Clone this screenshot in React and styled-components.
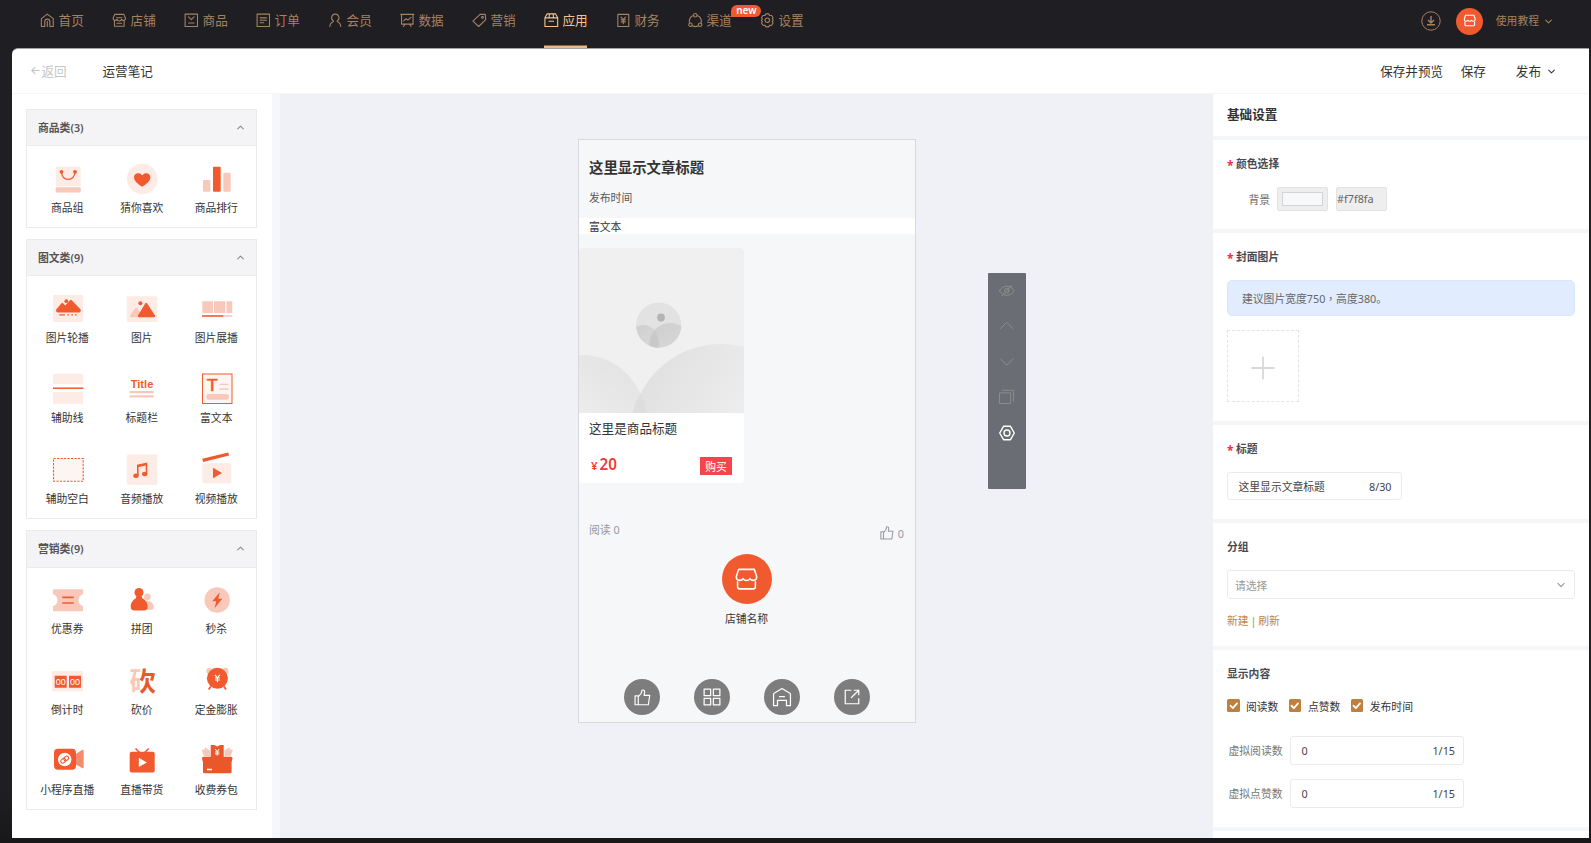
import React from 'react';
import styled, { createGlobalStyle } from 'styled-components';

const ORANGE = '#f15a2f';
const PEACH = '#f8c9ba';
const BLUSH = '#fdece6';

const GlobalStyle = createGlobalStyle`
  * {
    box-sizing: border-box;
  }
  body {
    margin: 0;
    background: #18171a;
    color: #333;
    font-family: "Noto Sans", "Noto Sans CJK SC", sans-serif;
    font-size: 10.8px;
  }
`;

const Page = styled.div`
  width: 1591px;
  height: 843px;
  display: flex;
  flex-direction: column;
  overflow: hidden;
  background: linear-gradient(#1f1e22 790px, #18171a);
`;

const Svg = styled.svg`
  display: block;
  flex: none;
  overflow: visible;
`;

/* ---------- line icons ---------- */

function LineIcon({ size = 15, width = 1, color = 'currentColor', children }) {
  return (
    <Svg width={size} height={size} viewBox="0 0 16 16" fill="none" stroke={color} strokeWidth={width} strokeLinejoin="round" strokeLinecap="round">
      {children}
    </Svg>
  );
}

const glyphs = {
  home: <path d="M1.5 6.2 8 1.2l6.5 5v8.6h-3.700V9.500a2.800 2.800 0 0 0-5.600 0v5.300H1.500ZM8 9v5.800" />,
  shop: (
    <>
      <path d="M3 1.500h10l1.800 4.300a2.200 2.200 0 0 1-4.200 1 2.700 2.700 0 0 1-5.200 0 2.200 2.200 0 0 1-4.200-1Z" />
      <path d="M2.700 8v6.500h10.600V8M5 5.200h6M5.500 11.300h5" />
    </>
  ),
  goods: <path d="M1.200 1.200h13.600v13.600H1.200ZM5 4.300l3 3 3-3M5 11h6" />,
  order: <path d="M1.200 1.200h13.600v13.600H1.200ZM4.500 5.300h7M4.500 8h7M4.500 10.700h4" />,
  member: <path d="M8 1.200a4 4 0 0 1 2.300 7.300L10 9.300c2.500 1 3.800 3 4 5.500M8 1.200a4 4 0 0 0-2.300 7.300L6 9.300c-2.500 1-3.800 3-4 5.500" />,
  data: <path d="M.8 1.500h14.400M1.700 1.500v10.700h12.600V1.500M4 8.700l2.600-2.600 2 1.700L12 4.700M5.300 12.500l-1.500 2.300M10.700 12.500l1.500 2.300" />,
  tag: (
    <>
      <path d="M8.800 1.500h5.700l.5 5.700-7.700 7.600L1 8.800Z" />
      <circle cx="11.500" cy="4.800" r="1" />
    </>
  ),
  app: <path d="M1 5.300 3.300 1h9.400L15 5.300v9.500H1ZM1 5.300h14M5.500 5.300 6 1M10.500 5.300 10 1M5.500 9h5" />,
  finance: <path d="M2 1.500h12v13.300H2ZM5.500 4.500 8 7.200l2.500-2.700M5.700 7.500h4.600M5.700 9.700h4.600M8 7.300v4.500" />,
  channel: (
    <>
      <path d="M5.800 2.700a6.500 6.500 0 0 0-4 8.400M10.200 2.700a6.500 6.500 0 0 1 4 8.400M4.700 14a7 7 0 0 0 6.600 0" />
      <circle cx="8" cy="2.500" r="1.900" />
      <circle cx="2.700" cy="12.800" r="1.900" />
      <circle cx="13.300" cy="12.800" r="1.900" />
    </>
  ),
  gear: (
    <>
      <path d="M6.500 1h3l1 1.600 2.300.1 1.500 2.500-.8 1.500 1 1.300-1 1.500.8 1.500-1.500 2.500-2.300.1-1 1.600h-3l-1-1.600-2.300-.1-1.500-2.500.8-1.500-1-1.500 1-1.300-.8-1.500 1.500-2.500 2.300-.1Z" />
      <circle cx="8" cy="8" r="2.500" />
    </>
  ),
  store: (
    <>
      <path d="M3 1.500h10l1.500 4.500c.3 3-3.200 3.200-4.300 1.400-1 1.700-3.400 1.700-4.400 0C4.700 9.200 1.200 9 1.500 6Z" />
      <path d="M2.300 9.500v3.200q0 1.300 1.300 1.300h8.800q1.300 0 1.300-1.300V9.500" />
    </>
  ),
  down: <path d="m3 5.500 5 5 5-5" />,
  up: <path d="m3 10.500 5-5 5 5" />,
  wideUp: <path d="m1.500 11 6.500-6.500 6.500 6.500" />,
  wideDown: <path d="m1.500 5 6.500 6.500L14.500 5" />,
  back: <path d="M14.500 8H1.500M7 2.500 1.500 8 7 13.500" />,
  thumb: <path d="M1 6.500h3v8.300H1ZM4 7.500 6.800 4 7.500 1.200c1.500-.7 2.600.2 2.500 1.700L9.500 6h5.300l-1.300 8.800H4Z" />,
  grid: <path d="M1 1h5.800v5.800H1ZM9.200 1H15v5.800H9.200ZM1 9.200h5.800V15H1ZM9.200 9.200H15V15H9.200Z" />,
  house: <path d="M.5 5.500Q.5 5 1 4.600L8 .5l7 4.100q.5.400.5.900v10.200h-3.500v-4.700h-8v4.700H.5ZM5.800 7.700h4.400" />,
  share: <path d="M7 2H2v12h12V9.500M10 2h4v4M14 2 7.500 8.500" />,
  hidden: (
    <>
      <path d="M.5 8c3-6.300 12-6.300 15 0-3 6.300-12 6.300-15 0ZM3 13.500 13 2.500" />
      <circle cx="8" cy="8" r="2.300" />
    </>
  ),
  copy: <path d="M1 4h11v11H1ZM3.500 1.300H15V12.500" />,
  hexagon: (
    <>
      <path d="M4.500 1.300h7L15.300 8l-3.800 6.700h-7L.7 8Z" />
      <circle cx="8" cy="8" r="3" />
    </>
  ),
};

/* ---------- top navigation ---------- */

const TopBar = styled.header`
  height: 48px;
  flex: none;
  display: flex;
  justify-content: space-between;
  padding: 0 38px 0 40px;
  color: #a58261;
`;

const Nav = styled.nav`
  display: flex;
  gap: 28.8px;
`;

const NavItem = styled.a`
  position: relative;
  width: 43.2px;
  height: 48px;
  padding-bottom: 7px;
  display: flex;
  align-items: center;
  gap: 4px;
  font-size: 12.600px;
  line-height: 20px;
  white-space: nowrap;
  color: ${({ $active }) => ($active ? '#f5c48d' : '#a58261')};
  box-shadow: ${({ $active }) => ($active ? 'inset 0 -2.500px #f0b77e' : 'none')};
`;

const NewBadge = styled.span`
  position: absolute;
  left: 43.500px;
  top: 5px;
  width: 30px;
  height: 12px;
  border-radius: 6px 6px 6px 0;
  background: ${ORANGE};
  color: #fff;
  font-size: 10px;
  font-weight: 600;
  line-height: 11px;
  text-align: center;
`;

const TopTools = styled.div`
  display: flex;
  align-items: center;
  padding-bottom: 6px;
`;

const Avatar = styled.span`
  width: ${({ $size }) => $size}px;
  height: ${({ $size }) => $size}px;
  margin-left: ${({ $left }) => $left || 0}px;
  border-radius: 50%;
  display: flex;
  align-items: center;
  justify-content: center;
  background: ${({ $bg }) => $bg || ORANGE};
  color: #fff;
`;

const Tutorial = styled.span`
  display: flex;
  align-items: center;
  gap: 5px;
  margin-left: 13px;
  padding-bottom: 2px;
  svg {
    margin-top: 2px;
  }
`;

const NAV = [
  ['home', '首页'],
  ['shop', '店铺'],
  ['goods', '商品'],
  ['order', '订单'],
  ['member', '会员'],
  ['data', '数据'],
  ['tag', '营销'],
  ['app', '应用'],
  ['finance', '财务'],
  ['channel', '渠道'],
  ['gear', '设置'],
];

function Header() {
  return (
    <TopBar>
      <Nav>
        {NAV.map(([icon, label]) => (
          <NavItem key={icon} $active={icon === 'app'}>
            <LineIcon size={14.600} width={1.2}>{glyphs[icon]}</LineIcon>
            {label}
            {icon === 'channel' && <NewBadge>new</NewBadge>}
          </NavItem>
        ))}
      </Nav>
      <TopTools>
        <Svg width="20" height="20" viewBox="0 0 20 20" fill="none" stroke="#a58261">
          <circle cx="10" cy="10" r="9.200" />
          <path d="M10 5v6.500M7 9l3 3 3-3M6 13.800h8" strokeWidth="1.400" />
        </Svg>
        <Avatar $size={27} $left={14.500}>
          <LineIcon size={13.500} width={1.300}>{glyphs.store}</LineIcon>
        </Avatar>
        <Tutorial>
          使用教程
          <LineIcon size={9} width={1.800}>{glyphs.down}</LineIcon>
        </Tutorial>
      </TopTools>
    </TopBar>
  );
}

/* ---------- workspace ---------- */

const Workspace = styled.main`
  width: 1577px;
  height: 790px;
  margin-left: 12px;
  display: flex;
  flex-direction: column;
  border-radius: 6px 0 0 0;
  border-top: 1px solid #a09fa3;
  overflow: hidden;
  background: #fff;
`;

const TitleBar = styled.div`
  height: 45px;
  flex: none;
  display: flex;
  align-items: center;
  padding: 0 33px 2px 19px;
  border-bottom: 1px solid #f5f6f8;
  font-size: 12.600px;
`;

const Back = styled.span`
  display: flex;
  align-items: center;
  gap: 1.500px;
  width: 71.500px;
  color: #c6c6c6;
`;

const Actions = styled.div`
  display: flex;
  align-items: center;
  margin-left: auto;
`;

const Action = styled.span`
  display: flex;
  align-items: center;
  gap: 6px;
  margin-left: ${({ $left }) => $left || 0}px;
  svg {
    margin-top: 3px;
  }
`;

const Columns = styled.div`
  flex: 1;
  min-height: 0;
  display: flex;
`;

/* ---------- component library ---------- */

const Sidebar = styled.aside`
  width: 268px;
  flex: none;
  padding: 15px 0 0 14px;
  display: flex;
  flex-direction: column;
  gap: 11px;
  border-right: 8px solid #f6f7fc;
`;

const Group = styled.section`
  width: 231px;
  border: 1px solid #ebebed;
`;

const GroupHead = styled.div`
  height: 36.400px;
  display: flex;
  align-items: center;
  justify-content: space-between;
  padding: 0 11.500px 2px 11px;
  background: #f4f4f7;
  border-bottom: 1px solid #ebebed;
  color: #555;
  font-weight: 600;
  svg {
    margin-top: 2px;
  }
`;

const GroupBody = styled.div`
  display: grid;
  grid-template-columns: repeat(3, 74.500px);
  grid-auto-rows: 80.600px;
  padding-left: 3px;
`;

const Tile = styled.div`
  display: flex;
  flex-direction: column;
  align-items: center;
  padding-top: 16.500px;
  line-height: 16px;
  gap: 5px;
  white-space: nowrap;
  svg {
    margin-left: 1.400px;
  }
`;

const pic = {
  商品组: (
    <>
      <rect x="3.700" y="3.700" width="25" height="19.600" rx="1" fill={BLUSH} />
      <rect x="3.700" y="24.200" width="25" height="5.300" rx="1" fill={PEACH} />
      <path d="M9.500 9c.3 4.500 3 7.300 6.700 7.300S22.600 13.500 23 9" fill="none" stroke={ORANGE} strokeWidth="1.300" />
      <circle cx="9.500" cy="8.800" r="1.900" fill={ORANGE} />
      <circle cx="23" cy="8.800" r="1.900" fill={ORANGE} />
    </>
  ),
  猜你喜欢: (
    <>
      <circle cx="16.200" cy="16" r="15.300" fill={BLUSH} />
      <path d="M16.200 23.700C12 21.300 8 18 8 14.300c0-4.300 5.700-5.500 8.200-2 2.500-3.500 8.200-2.300 8.200 2 0 3.700-4 7-8.200 9.400Z" fill={ORANGE} />
    </>
  ),
  商品排行: (
    <>
      <rect x="2" y="17" width="7.400" height="11.700" rx="1" fill={PEACH} />
      <rect x="12" y="3.700" width="7.700" height="25" rx="1" fill={ORANGE} />
      <rect x="22.300" y="9.700" width="7.400" height="19" rx="1" fill={PEACH} />
    </>
  ),
  图片轮播: (
    <>
      <rect x="1" y="2" width="30" height="27" rx="1" fill={BLUSH} />
      <path d="m4.200 16.500 5.300-6.300q.8-.9 1.600 0l2 2.300 5-5.300q.8-.9 1.700 0l8.800 9.300q1 1.700-1 2.900H5.200q-2-1.200-1-2.900Z" fill={ORANGE} />
      <circle cx="14.300" cy="8.200" r="1.900" fill={ORANGE} />
      <path d="M7.300 21.900H13M15.500 21.900h1.700M19.300 21.900H21M23 21.900h1.700" stroke={ORANGE} strokeWidth="1.400" />
    </>
  ),
  图片: (
    <>
      <rect x=".8" y="3.300" width="30.600" height="25.700" rx="1" fill={BLUSH} />
      <path d="m4.200 22.500 5-7.500q1-1.200 2 0l6 9.300H5q-1.500-.2-.8-1.800Z" fill={PEACH} />
      <path d="m12 22.500 7.200-12q1-1.500 2 0l7.800 12q.6 1.700-1 1.800H13q-1.600-.1-1-1.800Z" fill={ORANGE} />
      <circle cx="14.400" cy="10.300" r="2" fill={ORANGE} />
    </>
  ),
  图片展播: (
    <>
      <path d="M1.300 8.300H12V20H1.300ZM13 8.300h11.300V20H13ZM25.500 8.300h5.800V20h-5.800Z" fill={PEACH} />
      <path d="M22.300 23h9" stroke={PEACH} strokeWidth="1.600" />
      <path d="M1 23h21.300" stroke={ORANGE} strokeWidth="1.600" />
    </>
  ),
  辅助线: (
    <>
      <path d="M1 .7h30v10.600H1ZM1 19h30v11.700H1Z" fill={BLUSH} />
      <path d="M1 15.200h30.500" stroke={ORANGE} strokeWidth="1.500" />
    </>
  ),
  标题栏: (
    <>
      <text x="16" y="14.700" textAnchor="middle" fontFamily="Liberation Sans, sans-serif" fontWeight="700" fontSize="11" textLength="22.500" fill={ORANGE}>Title</text>
      <path d="M3.700 18h24v2.300h-24ZM3.700 22.300h24v2.300h-24Z" fill={PEACH} />
    </>
  ),
  富文本: (
    <>
      <rect x="1.500" y="1" width="29.500" height="29.500" fill="#fdf5f2" stroke={ORANGE} />
      <text x="11.200" y="18.300" textAnchor="middle" fontFamily="Liberation Sans, sans-serif" fontSize="16" textLength="11" lengthAdjust="spacingAndGlyphs" fill={ORANGE} stroke={ORANGE} strokeWidth=".6">T</text>
      <path d="M18.500 11.300h9M18.500 16h9" stroke={PEACH} strokeWidth="1.300" />
      <rect x="5.300" y="21" width="22.700" height="5.700" rx="2.800" fill={PEACH} />
    </>
  ),
  辅助空白: <rect x="1.500" y="4.500" width="29.700" height="22.700" fill="#fdf5f2" stroke={ORANGE} strokeWidth="1.100" strokeDasharray="2.200 1.300" />,
  音频播放: (
    <>
      <rect x=".8" y=".5" width="30.600" height="30.300" rx="1.500" fill={BLUSH} />
      <path d="M11.800 21.500v-10l8.700-2v10.200M11.800 12.500l8.700-2" stroke={ORANGE} strokeWidth="1.600" fill="none" />
      <ellipse cx="10" cy="21.700" rx="2.700" ry="2.200" fill={ORANGE} />
      <ellipse cx="18.700" cy="20" rx="2.700" ry="2.200" fill={ORANGE} />
    </>
  ),
  视频播放: (
    <>
      <path d="m1.200 4.800 26-6.300.9 3.100-26 6.300Z" fill={ORANGE} />
      <rect x="1.300" y="9.200" width="29" height="20" rx="1" fill={BLUSH} />
      <path d="m12 13.800 9 5.200-9 5.200Z" fill={ORANGE} />
    </>
  ),
  优惠券: (
    <>
      <path d="M1 6q0-.7.700-.7h28.600q.7 0 .7.700v4.300a6.300 6.300 0 0 0 0 12v4.300q0 .7-.7.700H1.700q-.7 0-.7-.7v-4.300a6.300 6.300 0 0 0 0-12Z" fill={PEACH} />
      <path d="M10.300 13.300h11.400M10.300 19h11.400" stroke={ORANGE} strokeWidth="1.700" />
    </>
  ),
  拼团: (
    <>
      <circle cx="21.400" cy="12.800" r="3.400" fill={PEACH} />
      <path d="M19 17c5-1.500 8.700 2 8.800 6.500q0 2.300-2 2.300H19Z" fill={PEACH} />
      <path d="M10.500 12h5l1 2.500c3 1.200 5.200 4.500 5.200 8.200q0 3.800-3.700 3.800H8.500q-3.800 0-3.800-3.800c0-3.700 2.300-7 5-8.200Z" fill={ORANGE} />
      <circle cx="13" cy="8.500" r="4.500" fill={ORANGE} />
    </>
  ),
  秒杀: (
    <>
      <circle cx="16.200" cy="16" r="12.700" fill={PEACH} />
      <path d="m18.700 8.300-7.400 9h4l-1.800 7 7.800-9.600h-4Z" fill={ORANGE} />
    </>
  ),
  倒计时: (
    <>
      <rect x="0" y="6" width="31" height="20.300" rx="1" fill={BLUSH} />
      <path d="M2.700 10.700h12v12h-12ZM17 10.700h12v12H17Z" fill={ORANGE} />
      <g fill="#fff" fontSize="9" fontFamily="Liberation Sans, sans-serif" textAnchor="middle">
        <text x="8.700" y="20">00</text>
        <text x="23" y="20">00</text>
      </g>
    </>
  ),
  砍价: (
    <>
      <defs>
        <linearGradient id="chop">
          <stop offset=".4" stopColor={PEACH} />
          <stop offset=".4" stopColor="#e8582a" />
        </linearGradient>
      </defs>
      <text x="16.500" y="25.500" textAnchor="middle" fontWeight="700" fontSize="26.500" fill="url(#chop)">砍</text>
    </>
  ),
  定金膨胀: (
    <>
      <circle cx="8.500" cy="6" r="3.200" fill={PEACH} />
      <circle cx="24.300" cy="6" r="3.200" fill={PEACH} />
      <path d="m9.700 21.500-2 3M23 21.500l2 3" stroke={ORANGE} strokeWidth="1.800" />
      <circle cx="16.400" cy="13.300" r="10.500" fill={ORANGE} />
      <path d="m14 9.800 2.400 3 2.400-3M16.400 12.700v4.500M14 13h4.800M14 15h4.800" stroke="#fff" fill="none" strokeWidth="1.100" />
    </>
  ),
  小程序直播: (
    <>
      <path d="M23 9.500 30 5q1.700-.7 1.700 1v16q0 1.700-1.700 1L23 19Z" fill="#f68c6e" />
      <rect x="2" y="3.800" width="22" height="21" rx="4" fill={ORANGE} />
      <circle cx="12.700" cy="14.500" r="6.700" fill="#fff" />
      <g transform="rotate(-38 12.700 14.500)" fill="none" stroke={ORANGE} strokeWidth="1.100">
        <rect x="8.200" y="12.700" width="5.300" height="3.800" rx="1.900" />
        <rect x="11.900" y="12.700" width="5.300" height="3.800" rx="1.900" />
      </g>
    </>
  ),
  直播带货: (
    <>
      <path d="m9.500 3.500 4 4M22.700 3.500l-4 4" stroke={ORANGE} strokeWidth="1.600" />
      <rect x="3.700" y="6.800" width="25" height="20.700" rx="2" fill={ORANGE} />
      <path d="m12.800 12.700 8 4.700-8 4.700Z" fill="#fff" />
    </>
  ),
  收费券包: (
    <>
      <path d="M3 11 .5 4.700l3-.2.500-2.200L9 5.500V11ZM29.500 11 32 4.700l-3-.2-.5-2.200-5 3.200V11Z" fill={PEACH} />
      <path d="M9.700 0h3.600l2.900 1.500L19 0h3.700v12h-13Z" fill="#e8582a" />
      <path d="m14.200 4 2 2.500 2-2.500M16.200 6.400v4.200M14 7h4.400M14 8.900h4.400" stroke="#fff" fill="none" />
      <path d="M2.300 11.700H30q1.500 0 1.500 1.500l-.6 3H1.600l-.6-3q0-1.500 1.300-1.500ZM2 16h28.600v11q0 1.300-1.300 1.300H3.300Q2 28.300 2 27Z" fill="#e8582a" />
      <path d="M6 24.500h5" stroke="#fff" strokeWidth="1.500" />
    </>
  ),
};

const GROUPS = [
  { name: '商品类', items: ['商品组', '猜你喜欢', '商品排行'] },
  { name: '图文类', items: ['图片轮播', '图片', '图片展播', '辅助线', '标题栏', '富文本', '辅助空白', '音频播放', '视频播放'] },
  { name: '营销类', items: ['优惠券', '拼团', '秒杀', '倒计时', '砍价', '定金膨胀', '小程序直播', '直播带货', '收费券包'] },
];

function Library() {
  return (
    <Sidebar>
      {GROUPS.map(({ name, items }) => (
        <Group key={name}>
          <GroupHead>
            {name}({items.length})
            <LineIcon size={9} width={1.800} color="#888">{glyphs.up}</LineIcon>
          </GroupHead>
          <GroupBody>
            {items.map((item) => (
              <Tile key={item}>
                <Svg width="32" height="32" viewBox="0 0 32 32">{pic[item]}</Svg>
                {item}
              </Tile>
            ))}
          </GroupBody>
        </Group>
      ))}
    </Sidebar>
  );
}

/* ---------- article preview ---------- */

const Canvas = styled.div`
  flex: 1;
  display: flex;
  align-items: flex-start;
  padding: 45px 0 0 298px;
  background: #f0f1f6;
`;

const Phone = styled.article`
  width: 338px;
  height: 584px;
  flex: none;
  border: 1px solid #d8d9dc;
  background: #f6f7f9;
`;

const ArticleTitle = styled.h1`
  margin: 0;
  padding: 17px 0 0 10px;
  font-size: 14.400px;
  font-weight: 600;
  line-height: 22px;
`;

const PublishTime = styled.div`
  padding: 11px 0 12px 10px;
  line-height: 16px;
  color: #555;
`;

const RichText = styled.div`
  height: 16px;
  line-height: 17px;
  padding-left: 10px;
  margin-bottom: 14px;
  background: #fff;
`;

const Product = styled.div`
  width: 165px;
  height: 235px;
  border-radius: 4px;
  overflow: hidden;
  background: #fff;
`;

const ProductTitle = styled.div`
  padding: 6px 0 0 10px;
  font-size: 12.600px;
  line-height: 20px;
`;

const PriceRow = styled.div`
  display: flex;
  align-items: center;
  justify-content: space-between;
  padding: 0 12px;
  margin-top: 18px;
  height: 18px;
`;

const Price = styled.span`
  color: #f23a33;
  font-size: 15.200px;
  font-weight: 600;
  line-height: 18px;
  margin-top: -2px;
  small {
    font-size: 11.500px;
    margin-right: 2px;
  }
`;

const Buy = styled.span`
  width: 32px;
  height: 18px;
  line-height: 19px;
  text-align: center;
  background: #f5444b;
  color: #fff;
`;

const Stats = styled.div`
  display: flex;
  justify-content: space-between;
  padding: 38px 11px 0 10px;
  line-height: 18px;
  color: #9699a3;
`;

const Likes = styled.span`
  display: flex;
  align-items: center;
  gap: 4px;
  margin-top: 3px;
  line-height: 19px;
  svg {
    margin-bottom: 2px;
  }
`;

const ShopCard = styled.div`
  display: flex;
  flex-direction: column;
  align-items: center;
  gap: 6px;
  margin: 11px 1px 0 0;
  line-height: 17px;
`;

const Dock = styled.div`
  display: flex;
  justify-content: center;
  gap: 34px;
  margin-top: 52px;
`;

const FloatBar = styled.div`
  width: 38px;
  height: 215.500px;
  margin: 134px 0 0 72px;
  padding-top: 9.500px;
  display: flex;
  flex-direction: column;
  align-items: center;
  gap: 20px;
  border-radius: 1px;
  background: #6b6d74;
`;

function Placeholder() {
  return (
    <Svg width="165" height="165" viewBox="0 0 165 165">
      <defs>
        <linearGradient id="hillLeft" x1=".8" y1=".1" x2=".4" y2=".6">
          <stop offset="0" stopColor="#e4e4e4" />
          <stop offset="1" stopColor="#efefef" />
        </linearGradient>
        <linearGradient id="hillRight" x1=".1" y1=".2" x2=".6" y2=".5">
          <stop offset="0" stopColor="#e1e1e1" />
          <stop offset="1" stopColor="#eee" />
        </linearGradient>
        <linearGradient id="ball" x1="0" y1="0" x2=".5" y2="1">
          <stop offset="0" stopColor="#cecece" />
          <stop offset="1" stopColor="#dadada" />
        </linearGradient>
        <clipPath id="frame">
          <rect width="165" height="165" />
        </clipPath>
        <clipPath id="disc">
          <circle cx="79.700" cy="77" r="22.700" />
        </clipPath>
      </defs>
      <g clipPath="url(#frame)">
        <rect width="165" height="165" fill="#f0f0f0" />
        <circle cx="3" cy="170" r="63" fill="url(#hillLeft)" />
        <circle cx="142" cy="186" r="90" fill="url(#hillRight)" />
        <path d="M62 144.500q4.500 10 5 20.500H53.500q2.500-11 8.500-20.500Z" fill="#dedede" />
      </g>
      <g clipPath="url(#disc)">
        <circle cx="79.700" cy="77" r="22.700" fill="#e2e2e2" />
        <circle cx="64" cy="93" r="16" fill="url(#ball)" />
        <circle cx="91.500" cy="97" r="22" fill="url(#ball)" />
        <path d="M75.500 82q5.500 8 4 18H71q-2-10 4.500-18Z" fill="#c9c9c9" />
      </g>
      <circle cx="82" cy="69.500" r="3.900" fill="#b4b4b4" />
    </Svg>
  );
}

function Preview() {
  return (
    <Canvas>
      <Phone>
        <ArticleTitle>这里显示文章标题</ArticleTitle>
        <PublishTime>发布时间</PublishTime>
        <RichText>富文本</RichText>
        <Product>
          <Placeholder />
          <ProductTitle>这里是商品标题</ProductTitle>
          <PriceRow>
            <Price><small>¥</small>20</Price>
            <Buy>购买</Buy>
          </PriceRow>
        </Product>
        <Stats>
          <span>阅读 0</span>
          <Likes>
            <LineIcon size={14} width={1.200}>{glyphs.thumb}</LineIcon>
            0
          </Likes>
        </Stats>
        <ShopCard>
          <Avatar $size={50}>
            <LineIcon size={25} width={1}>{glyphs.store}</LineIcon>
          </Avatar>
          店铺名称
        </ShopCard>
        <Dock>
          {['thumb', 'grid', 'house', 'share'].map((name) => (
            <Avatar key={name} $size={36} $bg="#7d7d7d">
              <LineIcon size={name === 'thumb' ? 17 : 18} width={1.100}>{glyphs[name]}</LineIcon>
            </Avatar>
          ))}
        </Dock>
      </Phone>
      <FloatBar>
        {['hidden', 'wideUp', 'wideDown', 'copy'].map((name) => (
          <LineIcon key={name} size={15.500} color="#8e8e8e">{glyphs[name]}</LineIcon>
        ))}
        <LineIcon size={16} width={1.400} color="#fff">{glyphs.hexagon}</LineIcon>
      </FloatBar>
    </Canvas>
  );
}

/* ---------- settings panel ---------- */

const Panel = styled.aside`
  width: 376px;
  flex: none;
  overflow: hidden;
`;

const PanelTitle = styled.h2`
  height: 41.500px;
  margin: 0;
  padding-left: 14px;
  font-size: 12.600px;
  font-weight: 600;
  line-height: 42px;
`;

const Section = styled.section`
  height: ${({ $height }) => $height}px;
  padding: 14px 14px 0;
  border-top: 4.500px solid #f5f6f8;
`;

const Label = styled.h3`
  margin: 0 0 13px;
  display: flex;
  align-items: center;
  font-size: 10.800px;
  font-weight: 600;
  line-height: 20px;
  color: #4a4a52;
  &::before {
    content: ${({ $required }) => ($required ? '"*"' : 'none')};
    width: 9px;
    color: #ee2c52;
    font-size: 12px;
    font-weight: 700;
    line-height: 14px;
    padding-top: 5px;
  }
`;

const ColorRow = styled.div`
  display: flex;
  align-items: center;
  padding-left: 21.500px;
  color: #666;
`;

const ColorBox = styled.span`
  width: 50.500px;
  height: 24px;
  margin-left: ${({ $left }) => $left}px;
  padding: ${({ $pad }) => $pad}px;
  display: flex;
  align-items: center;
  border: 1px solid #e2e2e2;
  border-radius: 2px;
  background: #eee;
`;

const Swatch = styled.span`
  flex: 1;
  height: 14px;
  border: 1px solid #d4d5d7;
  background: #f7f8fa;
`;

const Alert = styled.div`
  height: 36px;
  margin-bottom: 14.500px;
  padding-left: 14px;
  border: 1px solid #d9e7fb;
  border-radius: 5px;
  background: #e1edff;
  line-height: 35px;
  color: #666;
`;

const Comma = styled.span`
  font-family: "Noto Sans CJK TC", sans-serif;
`;

const Upload = styled.div`
  width: 72px;
  height: 72px;
  padding-top: 4px;
  display: flex;
  align-items: center;
  justify-content: center;
  border: 1px dashed #e4e4e4;
`;

const Field = styled.div`
  width: ${({ $width }) => $width};
  height: 28.500px;
  display: flex;
  align-items: center;
  justify-content: space-between;
  padding: 1px ${({ $right }) => $right || 9.5}px 0 ${({ $left }) => $left}px;
  border: 1px solid #ebebed;
  border-radius: 3px;
  color: ${({ $placeholder }) => ($placeholder ? '#999' : '#444')};
`;

const Links = styled.div`
  margin-top: 13px;
  line-height: 18px;
  word-spacing: -1px;
  color: #c4834a;
`;

const Checks = styled.div`
  display: flex;
  align-items: center;
  height: 20px;
  margin: -1.500px 0 20.500px;
`;

const Check = styled.label`
  display: flex;
  align-items: center;
  gap: 6.500px;
  margin-right: 10.500px;
`;

const Tick = styled.span`
  width: 12.500px;
  height: 12.500px;
  display: flex;
  align-items: center;
  justify-content: center;
  border-radius: 1.500px;
  background: #bf7f3f;
`;

const FieldRow = styled.div`
  display: flex;
  align-items: center;
  gap: 7.500px;
  padding-left: 1.500px;
  margin-bottom: 14.500px;
  color: #777;
`;

function Settings() {
  return (
    <Panel>
      <PanelTitle>基础设置</PanelTitle>
      <Section $height={93}>
        <Label $required>颜色选择</Label>
        <ColorRow>
          背景
          <ColorBox $left={7} $pad={4}><Swatch /></ColorBox>
          <ColorBox $left={8.500} $pad={0}>#f7f8fa</ColorBox>
        </ColorRow>
      </Section>
      <Section $height={192}>
        <Label $required>封面图片</Label>
        <Alert>建议图片宽度750<Comma>，</Comma>高度380。</Alert>
        <Upload>
          <Svg width="24" height="24" viewBox="0 0 24 24" stroke="#d8d8d8" strokeWidth="1.800">
            <path d="M12 .5v23M.5 12h23" />
          </Svg>
        </Upload>
      </Section>
      <Section $height={98.500}>
        <Label $required>标题</Label>
        <Field $width="175px" $left={10.500}>
          <span>这里显示文章标题</span>
          <span>8/30</span>
        </Field>
      </Section>
      <Section $height={127}>
        <Label>分组</Label>
        <Field $width="100%" $left={7} $right={8.500} $placeholder>
          请选择
          <LineIcon size={10} width={1.800}>{glyphs.down}</LineIcon>
        </Field>
        <Links>新建 | 刷新</Links>
      </Section>
      <Section $height={180.500}>
        <Label>显示内容</Label>
        <Checks>
          {['阅读数', '点赞数', '发布时间'].map((text) => (
            <Check key={text}>
              <Tick>
                <LineIcon size={9.500} width={3} color="#fff"><path d="m2.500 8 4 4 7-8" /></LineIcon>
              </Tick>
              {text}
            </Check>
          ))}
        </Checks>
        {['虚拟阅读数', '虚拟点赞数'].map((text) => (
          <FieldRow key={text}>
            {text}
            <Field $width="174.500px" $left={10.500} $right={8.500}>
              <span>0</span>
              <span>1/15</span>
            </Field>
          </FieldRow>
        ))}
      </Section>
      <Section $height={40} />
    </Panel>
  );
}

export default function App() {
  return (
    <Page>
      <GlobalStyle />
      <Header />
      <Workspace>
        <TitleBar>
          <Back>
            <LineIcon size={9} width={2}>{glyphs.back}</LineIcon>
            返回
          </Back>
          运营笔记
          <Actions>
            <Action>保存并预览</Action>
            <Action $left={17.500}>保存</Action>
            <Action $left={30}>
              发布
              <LineIcon size={9} width={1.800}>{glyphs.down}</LineIcon>
            </Action>
          </Actions>
        </TitleBar>
        <Columns>
          <Library />
          <Preview />
          <Settings />
        </Columns>
      </Workspace>
    </Page>
  );
}
